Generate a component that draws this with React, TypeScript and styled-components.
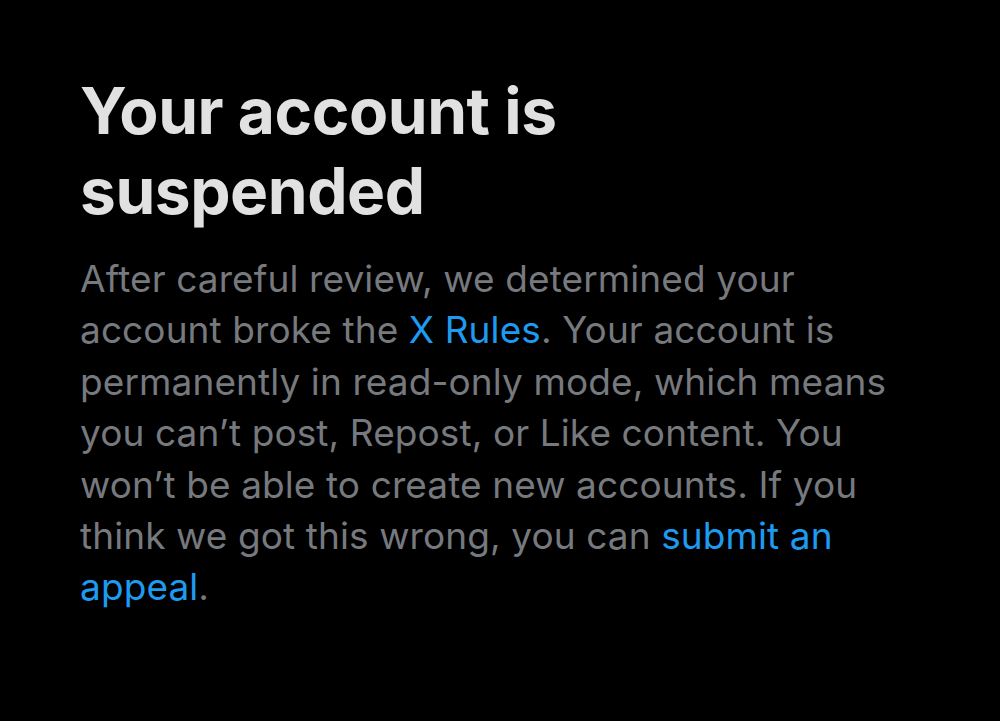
import React from "react";
import styled, { createGlobalStyle } from "styled-components";

const Global = createGlobalStyle`
  html, body { margin: 0; padding: 0; background: #000; }
  body { font-family: Inter, "Noto Sans", sans-serif; -webkit-font-smoothing: antialiased; }
`;

const Page = styled.main`
  width: 1000px;
  height: 721px;
  background: #000;
  box-sizing: border-box;
  padding: 71px 0 0 80px;
  overflow: hidden;
`;

const Title = styled.h1`
  margin: 0;
  font-family: Inter, "Noto Sans", sans-serif;
  font-weight: 700;
  font-size: 64px;
  line-height: 80px;
  color: #e1e1e1;
  letter-spacing: -0.45px;
`;

const Body = styled.p`
  margin: 22px 0 0;
  font-family: Inter, "Noto Sans", sans-serif;
  font-weight: 400;
  font-size: 37px;
  line-height: 51.4px;
  letter-spacing: 0.1px;
  color: #76797e;
  white-space: nowrap;
`;

const Link = styled.a`
  color: #1d9bf0;
  text-decoration: none;
`;

export default function App() {
  return (
    <>
      <Global />
      <Page>
        <Title>
          Your account is
          <br />
          suspended
        </Title>
        <Body>
          After careful review, we determined your
          <br />
          account broke the <Link href="#">X Rules</Link>. Your account is
          <br />
          permanently in read-only mode, which means
          <br />
          you can’t post, Repost, or Like content. You
          <br />
          won’t be able to create new accounts. If you
          <br />
          think we got this wrong, you can <Link href="#">submit an</Link>
          <br />
          <Link href="#">appeal</Link>.
        </Body>
      </Page>
    </>
  );
}
